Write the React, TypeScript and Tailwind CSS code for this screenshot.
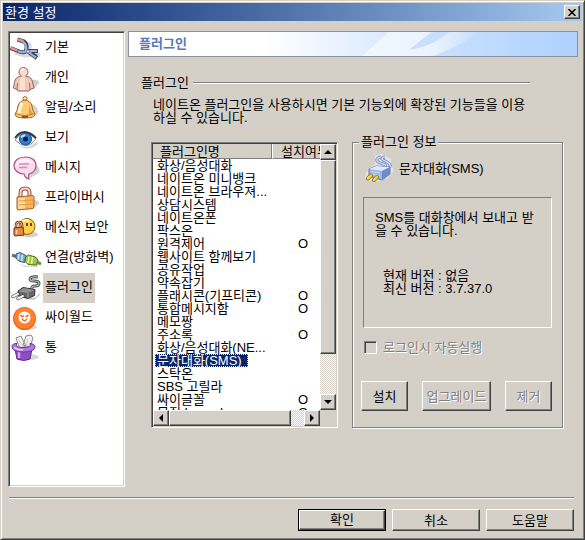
import { useState } from 'react';
import type { ReactNode } from 'react';
import clsx from 'clsx';

interface Plugin {
  name: string;
  installed?: boolean;
}

const plugins: Plugin[] = [
  { name: '화상/음성대화' },
  { name: '네이트온 미니뱅크' },
  { name: '네이트온 브라우져...' },
  { name: '상담시스템' },
  { name: '네이트온폰' },
  { name: '팍스온' },
  { name: '원격제어', installed: true },
  { name: '웹사이트 함께보기' },
  { name: '공유작업' },
  { name: '약속잡기' },
  { name: '플래시콘(기프티콘)', installed: true },
  { name: '통합메시지함', installed: true },
  { name: '메모짱' },
  { name: '주소록', installed: true },
  { name: '화상/음성대화(NE...' },
  { name: '문자대화(SMS)' },
  { name: '스탁온' },
  { name: 'SBS 고릴라' },
  { name: '싸이글꼴', installed: true },
  { name: '뮤직 Launcher', installed: true },
];

// Classic bevels
const raised =
  'bg-[#d4d0c8] border border-t-white border-l-white border-r-[#404040] border-b-[#404040] shadow-[inset_-1px_-1px_0_#808080]';
const sunken =
  'border border-t-[#808080] border-l-[#808080] border-r-white border-b-white shadow-[inset_1px_1px_0_#404040,inset_-1px_-1px_0_#d4d0c8]';
const track = 'bg-[repeating-conic-gradient(#ffffff_0_25%,#d4d0c8_0_50%)] bg-[length:2px_2px]';
const disabledText = 'disabled:text-[#808080] disabled:[text-shadow:1px_1px_0_#ffffff]';

function Icon({ children }: { children: ReactNode }) {
  return (
    <svg viewBox="0 0 33 30" className="w-[33px] h-[30px] shrink-0" fill="none" aria-hidden="true">
      {children}
    </svg>
  );
}

const menu: { label: string; icon: ReactNode }[] = [
  {
    label: '기본',
    icon: (
      <Icon>
        <path d="M12 8 20 11 20 17 30 23M5 20 15 23 30 21" stroke="#c9c9cf" strokeWidth="3" opacity=".7" />
        <path d="M7.500 6.500 14 8.500Q18 12 16 17L20 20 27 25M.5 15 8 18Q13 20.500 17 18L28 18" stroke="#3d4463" strokeWidth="4" strokeLinejoin="round" />
        <path d="M13 8.500Q17 12 16 17L20 20 26 24.500M8 18Q13 20.500 17 18L27 18" stroke="#9db1d9" strokeWidth="2.200" />
        <path d="m8 6.500 5.500 1.700M1 15l6.500 2.700" stroke="#f3907d" strokeWidth="2.500" />
        <circle cx="18" cy="18.500" r="1.500" fill="#e7eefb" stroke="#55628c" strokeWidth=".8" />
        <path d="m22 20 5 2.500" stroke="#3d4463" strokeWidth="1.500" />
      </Icon>
    ),
  },
  {
    label: '개인',
    icon: (
      <Icon>
        <path d="M21 17q8-1 8 3l-5 6H13z" fill="#cfcfcf" />
        <path d="M10.500 13.500q-5 0-6 6L3.500 25l3.500 1.500L8 28h11l1-1.500 4-1.500-1.500-6q-1-5.500-6-5.500z" fill="#efc9b6" stroke="#99605a" />
        <path d="M11 14q-2 4-1 13h5V14z" fill="#f9e2d2" />
        <path d="M7.500 20 7 27M19.500 20l.5 7" stroke="#a96f68" />
        <circle cx="13.500" cy="9" r="4.500" fill="#f7ddcc" stroke="#99605a" />
        <path d="M11 8q1-2 3-2" stroke="#fff6ec" strokeWidth="1.500" />
        <path d="M11.500 12.500v2.500h4v-2.500z" fill="#f3d3c1" />
      </Icon>
    ),
  },
  {
    label: '알림/소리',
    icon: (
      <Icon>
        <path d="M22 11q7 3 6 10l-8 4z" fill="#d4d4d4" />
        <circle cx="15" cy="5.500" r="2" fill="#fff1cc" stroke="#a86d27" />
        <path d="M15 7q-6 1-7 6 0 4-3 8 0 4 10 4t10-4q-3-4-3-8-1-5-7-6z" fill="#fbcb7c" stroke="#a0661f" />
        <path d="M12 10q-2 4-3 10" stroke="#fff3d8" strokeWidth="3" />
        <path d="M20 11q0 6 3 10l-4 2q-1-6 1-12z" fill="#ee9d3b" />
        <path d="M6 20.500q9 4 18 0" stroke="#c67c22" />
        <path d="M12 23.500q3 1 6 0" stroke="#7d4510" strokeWidth="1.500" />
      </Icon>
    ),
  },
  {
    label: '보기',
    icon: (
      <Icon>
        <path d="M8 23q12 3 19-5l1 3q-6 6-15 4z" fill="#d8d8d8" />
        <path d="M5 17q9-13 21-1-9 13-21 1z" fill="#f4f7fa" stroke="#8d9299" />
        <circle cx="15.500" cy="16" r="6" fill="#2f7fd3" stroke="#184a8c" />
        <circle cx="15.500" cy="16" r="2.500" fill="#0c1d3c" />
        <path d="m11 14 4-2" stroke="#c7e4ff" strokeWidth="2" />
        <path d="M5 15Q14 3 26 15" stroke="#33383f" strokeWidth="2" />
      </Icon>
    ),
  },
  {
    label: '메시지',
    icon: (
      <Icon>
        <path d="M25 11q6 4 4 9l-9 5-4-4z" fill="#d2d2d2" />
        <path d="M15 4C8 4 4 8 4 12.500S8 21 14 21q1 4 5 5-1-3 0-5 7-2 7-8.500C26 7 22 4 15 4z" fill="#fadbed" stroke="#a95585" strokeWidth="1.200" />
        <path d="M6 12q1-6 9-6 6 0 8 4-8-3-17 2z" fill="#fff4fa" />
        <path d="M9 11h10M9 14.500h8" stroke="#d191b7" strokeWidth="1.500" />
      </Icon>
    ),
  },
  {
    label: '프라이버시',
    icon: (
      <Icon>
        <path d="M23 17q7 0 6 4l-7 5z" fill="#d2d2d2" />
        <path d="M10.500 14V9.500q0-4 4.500-4t4.500 4V13" stroke="#94574d" strokeWidth="4" />
        <path d="M10.500 14V9.500q0-4 4.500-4t4.500 4V13" stroke="#f3d1c3" strokeWidth="2" />
        <path d="m7 14 16-1.500 1 1v10.500l-1 1.500-15 1.500-1-1z" fill="#f9b45a" stroke="#a55c26" />
        <path d="m8 15 7-.5v11l-7 .5z" fill="#fdd999" />
        <path d="m9 18 14-1M9 22l14-1" stroke="#e99a3e" />
      </Icon>
    ),
  },
  {
    label: '메신저 보안',
    icon: (
      <Icon>
        <ellipse cx="19" cy="21.500" rx="9" ry="3" fill="#d2d2d2" />
        <circle cx="17" cy="13.500" r="8" fill="#ffd04a" stroke="#8a5a10" />
        <path d="M12 9q3-3 7-1" stroke="#fff1b4" strokeWidth="2.500" />
        <path d="M17 10v3M21 10v3" stroke="#2c1c0d" strokeWidth="1.500" />
        <path d="M6 16v-4q0-3 3-3t3 3v4" stroke="#7e3d26" strokeWidth="2.500" />
        <path d="M6 16v-4q0-3 3-3t3 3v4" stroke="#eab294" />
        <path d="m4 15 9-1 1 8-9 1-1-1z" fill="#e58746" stroke="#722d18" />
        <path d="M6.500 17v4" stroke="#ffd9ae" strokeWidth="1.500" />
      </Icon>
    ),
  },
  {
    label: '연결(방화벽)',
    icon: (
      <Icon>
        <path d="M8 20q12 6 22 0l-3 4H15z" fill="#d8d8d8" />
        <path d="m2 12 5 2" stroke="#59788e" strokeWidth="3" />
        <path d="m6 11 4-1.500 6 3-1.500 7-6-1.500-2.500-3z" fill="#7fa9c8" stroke="#35597a" />
        <path d="m9 11-1 5.500M12.500 12l-1 6" stroke="#d5eaf7" strokeWidth="1.500" />
        <path d="m15.500 14 3-2 7 2 2.500 3-1.500 5-8.500-.5-3-3z" fill="#a3c746" stroke="#4d6e22" />
        <path d="m19 13.500-1 6.500M22.500 14l-1 7" stroke="#eaf5a8" strokeWidth="1.500" />
        <path d="m27 19 4 2" stroke="#6d8b34" strokeWidth="3" />
      </Icon>
    ),
  },
  {
    label: '플러그인',
    icon: (
      <Icon>
        <path d="m14 26 12-2 3-4 1 2-6 5z" fill="#cccccc" />
        <path d="M22 16q-1-3 3-3t4-3q0-2-5-2-4 0-4-2 1-3 8-2" stroke="#4c4c4c" strokeWidth="3" />
        <path d="M22 16q-1-3 3-3t4-3q0-2-5-2-4 0-4-2 1-3 8-2" stroke="#bdbdbd" strokeWidth="1.200" />
        <path d="m8 18 5-3.500 12 2-.5 6-6.500 3-9.500-2.500z" fill="#666666" stroke="#333333" />
        <path d="m8.500 18.500 9 1.500 7-3-11-2z" fill="#919191" />
        <path d="M18 20v5" stroke="#a8a8a8" />
        <path d="m3 23.500 5-2.500M8 25.500l5-2.500" stroke="#4a4a4a" strokeWidth="3.500" strokeLinecap="round" />
        <path d="m3 23.500 5-2.500M8 25.500l5-2.500" stroke="#f5f5f5" strokeWidth="2" strokeLinecap="round" />
        <path d="M0 18v3" stroke="#f2ec7a" strokeWidth="2" />
      </Icon>
    ),
  },
  {
    label: '싸이월드',
    icon: (
      <Icon>
        <ellipse cx="17" cy="24" rx="10" ry="3" fill="#d8d8d8" />
        <circle cx="14.500" cy="15.500" r="11.500" fill="#ee6716" />
        <circle cx="14.500" cy="15" r="10.500" fill="#ff8030" />
        <circle cx="14.500" cy="14.500" r="6" fill="#ffffff" />
        <path d="m10.500 12 1.500 1.500 2-.5M15.500 13l1.500.5 1.500-1.500M12 15.500q2.500 5 5 0" stroke="#f2671b" strokeWidth="1.500" />
      </Icon>
    ),
  },
  {
    label: '통',
    icon: (
      <Icon>
        <ellipse cx="19" cy="24" rx="10" ry="3" fill="#d8d8d8" />
        <path d="m6 5 5-2 5 10-6 3zM13 12l3-9 5-1 2 3-3 9z" fill="#efefef" stroke="#8b8b8b" />
        <path d="m9 7 4 7M18 6l-2 8" stroke="#cbcbcb" />
        <path d="m5 16 2 10q7 3 13 0l2-10z" fill="#8f4fc4" stroke="#5b2a86" />
        <path d="M9 18v7" stroke="#d4a7f2" strokeWidth="2.500" />
        <path d="M2 13.500q0 5.500 11.500 5.500T25 13.500q-1-3-5-3 2 4-7 4t-6-4q-5 0-5 3z" fill="#b07be0" stroke="#683296" />
        <path d="M4 14.500q4 2.500 9 2.500" stroke="#e5cbfa" strokeWidth="1.500" />
      </Icon>
    ),
  },
];

function PlugIcon() {
  return (
    <svg viewBox="0 0 30 28" className="w-[30px] h-[28px] shrink-0" fill="none" aria-hidden="true">
      <path d="M10 2 17 0l9 5v6l3 5-6 8-12 4-3-2-4 1-4-3 1-5 3-4 6-5z" fill="#e9e2e3" />
      <path d="M20 13q2-2-2-3t-6-3q-1-3 4-4M25 13q1-3-3-5t-5-3q0-2 3-2" stroke="#7488bd" strokeWidth="3" />
      <path d="M20 13q2-2-2-3t-6-3q-1-3 4-4M25 13q1-3-3-5t-5-3q0-2 3-2" stroke="#c8d9f7" strokeWidth="1.500" />
      <path d="m4 15 7-3 14 1v7l-8 6-13-4z" fill="#9db7ea" stroke="#6075ae" />
      <path d="m4 15 13 2 8-4-14-1z" fill="#dce8fc" />
      <path d="m17 17 8-4v7l-8 6z" fill="#6e8ccb" />
      <path d="m6 17.500 9 1.500M6 20l9 2" stroke="#ccdcfa" />
      <path d="m3 24.500 3-3M9 26l3-3" stroke="#94711a" strokeWidth="4" strokeLinecap="round" />
      <path d="m3 24.500 3-3M9 26l3-3" stroke="#f4cf38" strokeWidth="2.500" strokeLinecap="round" />
      <path d="m3 23.500 1-1M9 25l1-1" stroke="#fff6ba" strokeLinecap="round" />
    </svg>
  );
}

function ScrollButton({ label, points }: { label: string; points: string }) {
  return (
    <button aria-label={label} className={clsx(raised, 'w-4 h-4 shrink-0 flex items-center justify-center')}>
      <svg viewBox="0 0 8 8" className="w-2 h-2" aria-hidden="true">
        <polygon points={points} fill="#000000" />
      </svg>
    </button>
  );
}

function Sidebar() {
  const [active, setActive] = useState('플러그인');

  return (
    <nav className={clsx(sunken, 'w-[117px] shrink-0 bg-white p-px')}>
      <ul>
        {menu.map(item => (
          <li key={item.label}>
            <button onClick={() => setActive(item.label)} className="flex items-center h-[30px] w-full whitespace-nowrap">
              {item.icon}
              <span className={clsx('h-[30px] leading-[28px] px-[2px]', active === item.label && 'bg-[#d4d0c8]')}>
                {item.label}
              </span>
            </button>
          </li>
        ))}
      </ul>
    </nav>
  );
}

function PluginList() {
  const [selected, setSelected] = useState('문자대화(SMS)');

  return (
    <div className={clsx(sunken, 'w-[187px] h-[286px] shrink-0 bg-white p-px flex flex-col')}>
      <div className="flex flex-1 min-h-0">
        <div className="flex-1 min-w-0 overflow-hidden">
          <table className="w-[190px] table-fixed border-separate border-spacing-0 leading-[13px] whitespace-nowrap">
            <thead>
              <tr className="h-[15px]">
                <th className="w-[119px] bg-[#d4d0c8] border-r border-b border-[#808080] pl-[7px] py-0 text-left font-normal">플러그인명</th>
                <th className="bg-[#d4d0c8] border-l border-l-white border-b border-b-[#808080] pl-2 py-0 text-left font-normal">설치여부</th>
              </tr>
            </thead>
            <tbody>
              {plugins.map(p => (
                <tr key={p.name} onClick={() => setSelected(p.name)} className="h-[13px]">
                  <td className="p-0 pl-[2px]">
                    <span
                      className={clsx(
                        'block w-fit h-[13px] px-[2px]',
                        selected === p.name && 'bg-[#0a246a] text-white outline-1 -outline-offset-1 outline-dotted outline-[#f5db95] pr-1.5'
                      )}
                    >
                      {p.name}
                    </span>
                  </td>
                  <td className="p-0 pl-[26px]">{p.installed ? 'O' : ''}</td>
                </tr>
              ))}
            </tbody>
          </table>
        </div>
        <div className={clsx(track, 'w-4 flex flex-col')}>
          <ScrollButton label="위로" points="0,6 4,2 8,6" />
          <div className={clsx(raised, 'h-[194px]')} />
          <div className="flex-1" />
          <ScrollButton label="아래로" points="0,2 4,6 8,2" />
        </div>
      </div>
      <div className="flex h-4 bg-[#d4d0c8] pr-4">
        <div className={clsx(track, 'flex flex-1')}>
          <ScrollButton label="왼쪽" points="6,0 2,4 6,8" />
          <div className={clsx(raised, 'w-[122px]')} />
          <div className="flex-1" />
          <ScrollButton label="오른쪽" points="2,0 6,4 2,8" />
        </div>
      </div>
    </div>
  );
}

function PluginInfo() {
  const button = clsx(raised, disabledText, 'h-[30px] whitespace-nowrap');

  return (
    <fieldset className="flex-1 min-w-0 -mt-1.5 h-[292px] border border-[#808080] shadow-[1px_1px_0_#ffffff,inset_1px_1px_0_#ffffff] px-[10px]">
      <legend className="-ml-1 px-[2px] h-3 leading-3 bg-[#d4d0c8]">플러그인 정보</legend>
      <div className="flex items-center gap-1 mt-1.5 pl-[2px]">
        <PlugIcon />
        <span>문자대화(SMS)</span>
      </div>
      <div className="mt-[15px] h-[131px] border border-t-[#808080] border-l-[#808080] border-r-white border-b-white pl-[11px] pt-[13px] leading-[13px] whitespace-nowrap">
        <p>
          SMS를 대화창에서 보내고 받
          <br />을 수 있습니다.
        </p>
        <p className="mt-8 pl-2">
          현재 버전 : 없음
          <br />
          최신 버전 : 3.7.37.0
        </p>
      </div>
      <div className="flex items-center gap-1.5 mt-3 pl-px">
        <input
          id="autorun"
          type="checkbox"
          disabled
          className={clsx(sunken, 'appearance-none w-[13px] h-[13px] bg-[#d4d0c8]')}
        />
        <label htmlFor="autorun" className="text-[#808080] [text-shadow:1px_1px_0_#ffffff] whitespace-nowrap">
          로그인시 자동실행
        </label>
      </div>
      <div className="flex justify-between mt-[26px] -ml-[2px]">
        <button className={clsx(button, 'w-[47px]')}>설치</button>
        <button disabled className={clsx(button, 'w-[69px]')}>업그레이드</button>
        <button disabled className={clsx(button, 'w-[47px]')}>제거</button>
      </div>
    </fieldset>
  );
}

function Banner() {
  return (
    <header className="relative h-[26px] overflow-hidden border border-[#8f90a4] bg-linear-to-r from-white from-30% via-[#c3ddfe] via-75% to-[#aed1ff]">
      <svg viewBox="0 0 450 24" preserveAspectRatio="none" className="absolute inset-0 w-full h-full" aria-hidden="true">
        <defs>
          <linearGradient id="streak" gradientUnits="userSpaceOnUse" x1="234" y1="0" x2="355" y2="0">
            <stop offset="0" stopColor="#f2f8ff" />
            <stop offset=".6" stopColor="#e9f3ff" />
            <stop offset="1" stopColor="#e2efff" stopOpacity="0" />
          </linearGradient>
        </defs>
        <path d="M234 24 261 0h94Q335 12 306 24z" fill="url(#streak)" />
        <path d="M304 0h18Q304 15 281 18z" fill="#c8e0fe" />
      </svg>
      <h1 className="relative pl-[10px] leading-[23px] font-bold text-[#5479b9]">플러그인</h1>
    </header>
  );
}

export default function App() {
  return (
    <div className="min-h-screen flex flex-col bg-[#d4d0c8] border border-t-[#d4d0c8] border-l-[#d4d0c8] border-r-[#404040] border-b-[#404040] shadow-[inset_1px_1px_0_#ffffff,inset_-1px_-1px_0_#808080] p-[2px] text-[13px] leading-[15px] text-black font-['Liberation_Sans','Noto_Sans_CJK_KR',sans-serif]">
      <div className="flex items-center justify-between h-[18px] px-[2px] bg-linear-to-r from-[#0a246a] to-[#a6caf0] text-white">
        <span>환경 설정</span>
        <button aria-label="닫기" className={clsx(raised, 'w-4 h-[14px] flex items-center justify-center')}>
          <svg viewBox="0 0 8 7" className="w-2 h-[7px]" aria-hidden="true">
            <path d="m.5 0 7 7m0-7-7 7" stroke="#000000" strokeWidth="1.500" />
          </svg>
        </button>
      </div>

      <div className="flex flex-1 gap-[3px] pt-[10px] pl-[5px] pr-1">
        <Sidebar />
        <main className="flex-1 min-w-0">
          <Banner />
          <section className="pl-[13px]">
            <div className="flex items-center gap-1 mt-5 pr-12">
              <h2 className="leading-3">플러그인</h2>
              <div className="flex-1 h-[2px] border-t border-t-[#808080] border-b border-b-white" />
            </div>
            <p className="mt-[9px] pl-3 leading-[13px] whitespace-nowrap">
              네이트온 플러그인을 사용하시면 기본 기능외에 확장된 기능들을 이용
              <br />
              하실 수 있습니다.
            </p>
            <div className="flex gap-[14px] mt-[18px] pl-[10px] pr-[15px]">
              <PluginList />
              <PluginInfo />
            </div>
          </section>
        </main>
      </div>

      <footer className="mt-[10px] pl-1.5 pr-2 pb-1.5">
        <div className="h-[2px] border-t border-t-[#808080] border-b border-b-white" />
        <div className="flex justify-end gap-1.5 mt-[10px]">
          <button className="w-[88px] h-[22px] border border-black">
            <span className={clsx(raised, 'block h-5 leading-[18px]')}>확인</span>
          </button>
          <button className={clsx(raised, 'w-[88px] h-[22px]')}>취소</button>
          <button className={clsx(raised, 'w-[88px] h-[22px]')}>도움말</button>
        </div>
      </footer>
    </div>
  );
}
